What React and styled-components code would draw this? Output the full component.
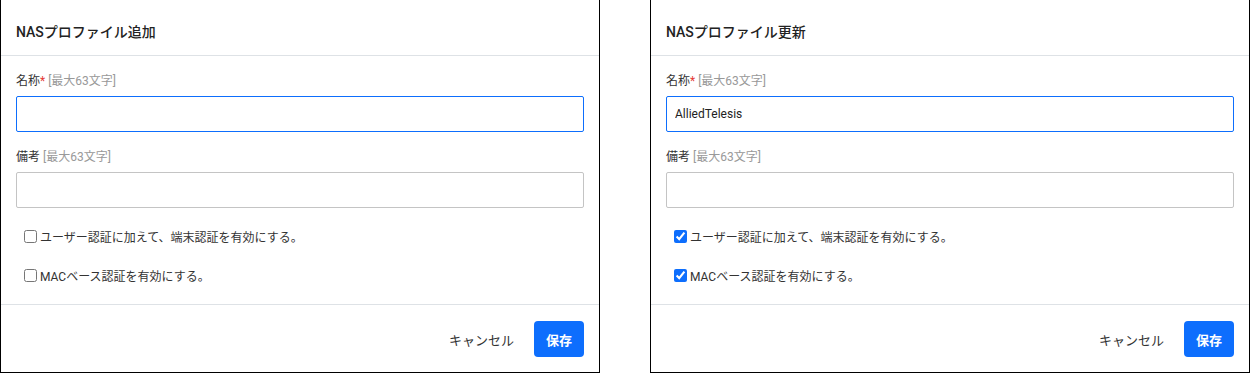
import React from 'react';
import styled, { createGlobalStyle } from 'styled-components';

const GlobalStyle = createGlobalStyle`
    body {
        margin: 0;
        background: #fff;
        font-family: Roboto, "Noto Sans CJK JP", sans-serif;
        color: #333;
    }
`;

const Page = styled.div`
    display: flex;
    gap: 50px;
    align-items: flex-start;
`;

const Dialog = styled.div`
    width: 600px;
    box-sizing: border-box;
    border: 1px solid #000;
    border-top: none;
    background: #fff;
    display: flex;
    flex-direction: column;
`;

const Header = styled.div`
    padding: 22px 15px 13px;
    border-bottom: 1px solid #dee2e6;
    font-size: 14px;
    font-weight: 500;
    line-height: 20px;
    color: #222;
`;

const Body = styled.div`
    padding: 15px 15px 19px;
    display: flex;
    flex-direction: column;
`;

const Label = styled.label`
    display: block;
    font-size: 12px;
    line-height: 20px;
    margin-bottom: 5px;
    color: #333;
`;

const Required = styled.span`
    color: #e53935;
`;

const Hint = styled.span`
    color: #999;
    margin-left: 3px;
`;

const TextInput = styled.input`
    box-sizing: border-box;
    width: 100%;
    height: 36px;
    padding: 0 8px;
    font-family: Roboto, "Noto Sans CJK JP", sans-serif;
    font-size: 12px;
    color: #222;
    border: 1px solid ${p => (p.$focused ? '#0d6efd' : '#c4c4c4')};
    border-radius: 2px;
    outline: none;
    margin-bottom: ${p => (p.$last ? '18px' : '15px')};
`;

const CheckRow = styled.label`
    display: flex;
    align-items: center;
    gap: 3px;
    height: 20px;
    padding-left: 8px;
    font-size: 12px;
    color: #333;
    & + & {
        margin-top: 19px;
    }
    input {
        margin: 0;
        width: 13px;
        height: 13px;
        accent-color: #0d6efd;
    }
`;

const Footer = styled.div`
    border-top: 1px solid #dee2e6;
    padding: 16px 15px 15px;
    display: flex;
    justify-content: flex-end;
    align-items: center;
    gap: 20px;
`;

const CancelButton = styled.button`
    background: none;
    border: none;
    padding: 0;
    font-family: Roboto, "Noto Sans CJK JP", sans-serif;
    font-size: 13px;
    color: #333;
`;

const SaveButton = styled.button`
    height: 36px;
    width: 50px;
    border: none;
    border-radius: 4px;
    background: #0d6efd;
    color: #fff;
    font-family: Roboto, "Noto Sans CJK JP", sans-serif;
    font-size: 13px;
    font-weight: 700;
`;

const ProfileDialog = ({ title, name, checked }) => (
    <Dialog>
        <Header>{title}</Header>
        <Body>
            <Label>名称<Required>*</Required><Hint>[最大63文字]</Hint></Label>
            <TextInput $focused defaultValue={name} />
            <Label>備考<Hint>[最大63文字]</Hint></Label>
            <TextInput $last />
            <CheckRow>
                <input type="checkbox" defaultChecked={checked} />
                ユーザー認証に加えて、端末認証を有効にする。
            </CheckRow>
            <CheckRow>
                <input type="checkbox" defaultChecked={checked} />
                MACベース認証を有効にする。
            </CheckRow>
        </Body>
        <Footer>
            <CancelButton>キャンセル</CancelButton>
            <SaveButton>保存</SaveButton>
        </Footer>
    </Dialog>
);

const App = () => (
    <>
        <GlobalStyle />
        <Page>
            <ProfileDialog title="NASプロファイル追加" name="" checked={false} />
            <ProfileDialog title="NASプロファイル更新" name="AlliedTelesis" checked />
        </Page>
    </>
);

export default App;
